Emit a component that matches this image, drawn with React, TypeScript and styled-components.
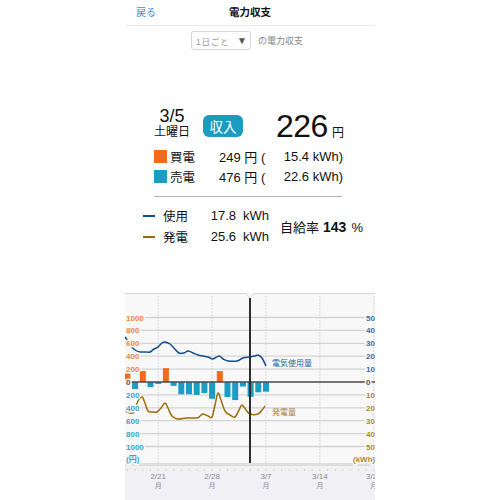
import React from "react";
import styled, { createGlobalStyle } from "styled-components";

const GlobalStyle = createGlobalStyle`
  html, body { margin: 0; padding: 0; background: #fff; }
  body { font-family: 'Liberation Sans', 'Noto Sans CJK JP', sans-serif; color: #111; }
`;

const Phone = styled.div`
  width: 250px;
  height: 500px;
  margin: 0 auto;
  display: flex;
  flex-direction: column;
  overflow: hidden;
  background: #fff;
`;

const NavBar = styled.div`
  height: 26px;
  box-sizing: border-box;
  border-bottom: 1px solid #e8e8e8;
  display: grid;
  grid-template-columns: 1fr auto 1fr;
  align-items: center;
  padding: 0 11px 2px;
`;

const BackLink = styled.span`
  color: #3a8ee8;
  font-size: 10px;
`;

const Title = styled.span`
  font-size: 10.5px;
  font-weight: bold;
  color: #111;
`;

const FilterRow = styled.div`
  margin-top: 5px;
  display: flex;
  justify-content: center;
  align-items: center;
  gap: 7px;
  padding-right: 6px;
`;

const Dropdown = styled.div`
  width: 60px;
  height: 19px;
  box-sizing: border-box;
  border: 1px solid #d6d6d6;
  border-radius: 3px;
  display: flex;
  align-items: center;
  justify-content: space-between;
  padding: 0 3px 0 4px;
  font-size: 8.5px;
  letter-spacing: 0.8px;
  color: #999;
`;

const Caret = styled.span`
  color: #555;
  font-size: 10px;
  letter-spacing: 0;
`;

const FilterText = styled.span`
  font-size: 9px;
  color: #888;
`;

const SummaryTop = styled.div`
  margin-top: 57px;
  display: flex;
  align-items: flex-start;
  padding-left: 29px;
`;

const DateBlock = styled.div`
  display: flex;
  flex-direction: column;
  align-items: center;
`;

const DateText = styled.span`
  font-size: 18px;
  line-height: 18px;
`;

const Weekday = styled.span`
  font-size: 12px;
  line-height: 14px;
`;

const Badge = styled.span`
  margin: 8px 0 0 13px;
  width: 40px;
  height: 22px;
  border-radius: 6px;
  background: #1a9cc1;
  color: #fff;
  font-size: 13.5px;
  display: flex;
  align-items: center;
  justify-content: center;
`;

const Amount = styled.div`
  margin: 3px 0 0 33px;
  display: flex;
  align-items: baseline;
  gap: 4px;
`;

const AmountValue = styled.span`
  font-size: 32px;
  line-height: 32px;
  letter-spacing: -0.5px;
`;

const Unit = styled.span`
  font-size: 12px;
`;

const Breakdown = styled.div`
  margin-top: 4px;
  padding-left: 29px;
  display: flex;
  flex-direction: column;
`;

const BreakdownRow = styled.div`
  height: 20px;
  display: flex;
  align-items: center;
  font-size: 12.5px;
`;

const Swatch = styled.span<{ $color: string }>`
  width: 13px;
  height: 13px;
  background: ${(p) => p.$color};
  margin-right: 3px;
`;

const RowLabel = styled.span`
  width: 49px;
`;

const Yen = styled.span`
  width: 62px;
  font-size: 13px;
  white-space: pre;
`;

const Kwh = styled.span`
  width: 62px;
  text-align: right;
  font-size: 13px;
`;

const Divider = styled.div`
  margin: 10px 0 0 29px;
  width: 188px;
  height: 1px;
  background: #b4b4b4;
`;

const Legend = styled.div`
  margin-top: 8px;
  padding-left: 18px;
  display: flex;
  align-items: center;
`;

const LegendRows = styled.div`
  display: flex;
  flex-direction: column;
`;

const LegendRow = styled.div`
  height: 21px;
  display: flex;
  align-items: center;
  font-size: 12.5px;
`;

const LegendLine = styled.span<{ $color: string }>`
  width: 12px;
  height: 2px;
  background: ${(p) => p.$color};
  margin-right: 8px;
`;

const LegendLabel = styled.span`
  width: 36px;
`;

const LegendValue = styled.span`
  width: 37px;
  text-align: right;
  font-size: 13px;
`;

const LegendUnit = styled.span`
  margin-left: 7px;
  font-size: 13px;
`;

const SelfRate = styled.div`
  margin-left: 11px;
  display: flex;
  align-items: baseline;
  font-size: 13px;
`;

const Rate = styled.b`
  font-size: 14px;
  margin: 0 5px 0 4px;
`;

const ChartWrap = styled.div`
  margin-top: auto;
  height: 207px;
`;

// chart geometry (local to the chart svg)
const ZERO = 89;
const STEP = 12.9;
const dayX = (i: number) => 2.4 + i * 7.7;
const gridYs = [-5, -4, -3, -2, -1, 0, 1, 2, 3, 4, 5].map((k) => ZERO + k * STEP);

const bars = [200, -110, 170, -80, -30, 215, -60, -190, -190, -200, -170, -260, 170, -235, -280, -70, -230, -160, -150];

const usage: [number, number][] = [
  [125, 337], [128, 341], [131, 346], [135, 350], [140, 352], [146, 352], [150, 352], [154, 349], [158, 347],
  [162, 343], [165, 342], [170, 344], [174, 348], [179, 353], [184, 353], [188, 351], [193, 353], [198, 355],
  [203, 356], [208, 357], [213, 359], [219, 356], [223, 359], [228, 361], [237, 361], [243, 358], [250, 357],
  [255, 356], [258, 355], [262, 358], [266, 366],
];

const solar: [number, number][] = [
  [125, 411], [130, 413], [134, 412], [138, 401], [142, 397], [145, 403], [148, 411], [153, 412], [157, 412],
  [161, 408], [165, 403], [168, 408], [172, 416], [178, 419], [187, 418], [197, 418], [200, 416], [203, 414],
  [208, 416], [212, 417], [215, 405], [218, 393], [221, 400], [225, 411], [230, 415], [235, 417], [239, 410],
  [242, 405], [246, 410], [250, 414], [258, 414], [262, 410], [265, 406],
];

const smooth = (pts: [number, number][]) => {
  const p = pts.map(([x, y]) => [x - 125, y - 293]);
  let d = `M${p[0][0]},${p[0][1]}`;
  for (let i = 0; i < p.length - 1; i++) {
    const p0 = p[i - 1] || p[i];
    const p1 = p[i];
    const p2 = p[i + 1];
    const p3 = p[i + 2] || p2;
    const c1x = p1[0] + (p2[0] - p0[0]) / 6;
    const c1y = p1[1] + (p2[1] - p0[1]) / 6;
    const c2x = p2[0] - (p3[0] - p1[0]) / 6;
    const c2y = p2[1] - (p3[1] - p1[1]) / 6;
    d += ` C${c1x.toFixed(1)},${c1y.toFixed(1)} ${c2x.toFixed(1)},${c2y.toFixed(1)} ${p2[0]},${p2[1]}`;
  }
  return d;
};

const leftLabels = ["1000", "800", "600", "400", "200", "0", "200", "400", "600", "800", "1000"];
const rightLabels = ["50", "40", "30", "20", "10", "0", "10", "20", "30", "40", "50"];
const dates = [
  { i: 4, t: "2/21" },
  { i: 11, t: "2/28" },
  { i: 18, t: "3/7" },
  { i: 25, t: "3/14" },
  { i: 32, t: "3/21" },
];

const ORANGE = "#f26a1b";
const TEAL = "#1b9dc3";
const NAVY = "#124d8b";
const GOLD = "#9b6b0c";
const BG = "#f8f8f8";

const labelColor = (k: number, side: "l" | "r") => {
  if (k === 5) return "#555";
  if (side === "l") return k < 5 ? "#f0873a" : "#3aa5c9";
  return k < 5 ? "#3d6fa3" : "#b08a30";
};

const Chart = () => (
  <svg width="250" height="207" viewBox="0 0 250 207">
    <rect x="0" y="0" width="250" height="170" fill={BG} />
    <rect x="0" y="170" width="250" height="3" fill="#dedede" />
    <rect x="0" y="173" width="250" height="34" fill="#f1f1f5" />
    <path d="M0,0.5 H121 L125,5.5 L129,0.5 H250" fill="none" stroke="#d4d4d4" strokeWidth="1" />
    {dates.map((d) => (
      <line key={d.t} x1={dayX(d.i)} x2={dayX(d.i)} y1="3" y2="170" stroke="#d8d8d8" strokeWidth="1" strokeDasharray="2 1" />
    ))}
    {gridYs.map((y, k) =>
      k === 5 ? null : <line key={k} x1="0" x2="250" y1={y} y2={y} stroke="#d3d3d3" strokeWidth="1.3" />
    )}
    {bars.map((v, i) => {
      const h = Math.abs(v) * (STEP / 200);
      return (
        <rect
          key={i}
          x={dayX(i) - 3}
          y={v > 0 ? ZERO - h : ZERO}
          width="6"
          height={h}
          fill={v > 0 ? ORANGE : TEAL}
        />
      );
    })}
    <line x1="0" x2="250" y1={ZERO} y2={ZERO} stroke="#4a4a4a" strokeWidth="1.6" />
    <path d={smooth(usage)} fill="none" stroke={NAVY} strokeWidth="1.5" strokeLinejoin="round" />
    <path d={smooth(solar)} fill="none" stroke={GOLD} strokeWidth="1.5" strokeLinejoin="round" />
    <line x1="125" x2="125" y1="5" y2="170" stroke="#2e2e2e" strokeWidth="2" />
    <g fontFamily="'Liberation Sans', sans-serif" fontSize="8" fontWeight="bold" stroke={BG} strokeWidth="3" paintOrder="stroke">
      {leftLabels.map((t, k) => (
        <text key={`l${k}`} x="1" y={gridYs[k] + 3} fill={labelColor(k, "l")}>{t}</text>
      ))}
      <text x="1" y="169" fill="#3aa5c9" fontFamily="'Liberation Sans', 'Noto Sans CJK JP', sans-serif">(円)</text>
      {rightLabels.map((t, k) => (
        <text key={`r${k}`} x="241" y={gridYs[k] + 3} fill={labelColor(k, "r")}>{t}</text>
      ))}
      <text x="228" y="169" fill="#b08a30">(kWh)</text>
    </g>
    <text x="147" y="73" fontSize="8" fill="#2f5f95" fontFamily="'Noto Sans CJK JP', sans-serif">電気使用量</text>
    <text x="147" y="122" fontSize="8" fill="#a98230" fontFamily="'Noto Sans CJK JP', sans-serif">発電量</text>
    {Array.from({ length: 33 }, (_, i) => (
      <rect key={`t${i}`} x={dayX(i) - 0.5} y="176.5" width="1" height="1" fill="#b0b0b0" />
    ))}
    <g fontSize="8" fill="#8a8a8a" textAnchor="middle" fontFamily="'Liberation Sans', 'Noto Sans CJK JP', sans-serif">
      {dates.map((d) => (
        <React.Fragment key={d.t}>
          <text x={dayX(d.i)} y="186">{d.t}</text>
          <text x={dayX(d.i)} y="195" fontSize="7">月</text>
        </React.Fragment>
      ))}
    </g>
  </svg>
);

export default function App() {
  return (
    <>
      <GlobalStyle />
      <Phone>
        <NavBar>
          <BackLink>戻る</BackLink>
          <Title>電力収支</Title>
          <span />
        </NavBar>
        <FilterRow>
          <Dropdown>
            <span>1日ごと</span>
            <Caret>▼</Caret>
          </Dropdown>
          <FilterText>の電力収支</FilterText>
        </FilterRow>
        <SummaryTop>
          <DateBlock>
            <DateText>3/5</DateText>
            <Weekday>土曜日</Weekday>
          </DateBlock>
          <Badge>収入</Badge>
          <Amount>
            <AmountValue>226</AmountValue>
            <Unit>円</Unit>
          </Amount>
        </SummaryTop>
        <Breakdown>
          <BreakdownRow>
            <Swatch $color={ORANGE} />
            <RowLabel>買電</RowLabel>
            <Yen>249 円 (</Yen>
            <Kwh>15.4 kWh)</Kwh>
          </BreakdownRow>
          <BreakdownRow>
            <Swatch $color={TEAL} />
            <RowLabel>売電</RowLabel>
            <Yen>476 円 (</Yen>
            <Kwh>22.6 kWh)</Kwh>
          </BreakdownRow>
        </Breakdown>
        <Divider />
        <Legend>
          <LegendRows>
            <LegendRow>
              <LegendLine $color={NAVY} />
              <LegendLabel>使用</LegendLabel>
              <LegendValue>17.8</LegendValue>
              <LegendUnit>kWh</LegendUnit>
            </LegendRow>
            <LegendRow>
              <LegendLine $color={GOLD} />
              <LegendLabel>発電</LegendLabel>
              <LegendValue>25.6</LegendValue>
              <LegendUnit>kWh</LegendUnit>
            </LegendRow>
          </LegendRows>
          <SelfRate>
            自給率<Rate>143</Rate>%
          </SelfRate>
        </Legend>
        <ChartWrap>
          <Chart />
        </ChartWrap>
      </Phone>
    </>
  );
}
